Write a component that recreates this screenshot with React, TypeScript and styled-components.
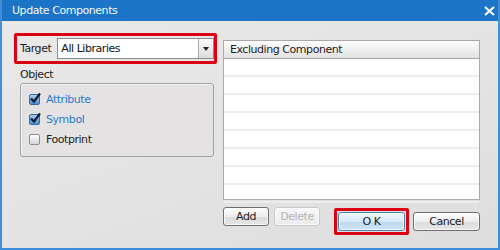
import React, { FC } from 'react';
import styled, { createGlobalStyle } from 'styled-components';

const GlobalStyle = createGlobalStyle`
  html, body {
    margin: 0;
    padding: 0;
    background: #ffffff;
  }
  body {
    font-family: 'DejaVu Sans', Verdana, sans-serif;
    letter-spacing: -0.45px;
  }
`;

const ROWS = 8;

const Window = styled.div`
  width: 500px;
  height: 250px;
  box-sizing: border-box;
  display: flex;
  flex-direction: column;
  border: 2px solid #3d8fdc;
  border-top: none;
  background: #1b74c5;
  overflow: hidden;
`;

const TitleBar = styled.div`
  height: 21px;
  flex: none;
  display: flex;
  align-items: center;
  justify-content: space-between;
  padding: 0 5px 0 12px;
  margin: 0 -2px;
  background: #1b74c5;
  color: #f4f8fd;
  font-size: 11px;
`;

const CloseIcon = styled.svg`
  width: 11px;
  height: 10px;
  margin-top: 1px;
`;

const Body = styled.div`
  flex: 1;
  display: flex;
  gap: 6px;
  padding: 12px 18px 0 12px;
  background: linear-gradient(160deg, #e9e9e9 0%, #dedede 100%);
`;

const LeftColumn = styled.div`
  width: 203px;
  display: flex;
  flex-direction: column;
`;

const RightColumn = styled.div`
  flex: 1;
  display: flex;
  flex-direction: column;
  padding-top: 7px;
`;

const Highlight = styled.div`
  border: 3px solid #dc0010;
  border-radius: 2px;
  padding: 1px;
  display: flex;
  align-items: center;
`;

const TargetBox = styled(Highlight)`
  height: 23px;
  padding: 1px 0 1px 3px;
  gap: 6px;
`;

const Label = styled.span<{ $color?: string }>`
  font-size: 11px;
  color: ${(p) => p.$color ?? '#222222'};
`;

const Combo = styled.div`
  flex: 1;
  height: 19px;
  display: flex;
  border: 1px solid #8c8c8c;
  background: #ffffff;
`;

const ComboText = styled.span`
  flex: 1;
  font-size: 11px;
  color: #111111;
  padding-left: 3px;
  line-height: 19px;
`;

const ComboButton = styled.div`
  width: 14px;
  border-left: 1px solid #a8a8a8;
  background: linear-gradient(#fbfbfb, #dcdcdc);
  display: flex;
  align-items: center;
  justify-content: center;
`;

const Arrow = styled.div`
  width: 0;
  height: 0;
  border-left: 3.5px solid transparent;
  border-right: 3.5px solid transparent;
  border-top: 4px solid #222222;
`;

const GroupTitle = styled.div`
  font-size: 11px;
  color: #222222;
  margin: 4px 0 0 6px;
  height: 15px;
`;

const GroupBox = styled.div`
  margin: 0 3px 0 6px;
  height: 74px;
  box-sizing: border-box;
  border: 1px solid #a2a2a2;
  border-radius: 3px;
  background: #e4e2e2;
  box-shadow: inset 1px 1px 0 #f4f4f4;
  display: flex;
  flex-direction: column;
  padding: 9px 0 0 8px;
  gap: 8px;
`;

const CheckRow = styled.div`
  display: flex;
  align-items: center;
  gap: 6px;
  height: 12px;
`;

const Box = styled.div<{ $checked?: boolean }>`
  width: 11px;
  height: 11px;
  box-sizing: border-box;
  border: 1px solid ${(p) => (p.$checked ? '#356aa3' : '#8e8e8e')};
  border-radius: 2px;
  background: ${(p) =>
    p.$checked ? 'linear-gradient(#a9cdef, #4f8fd0)' : 'linear-gradient(#ffffff, #d6d6d6)'};
  position: relative;
`;

const Tick = styled.svg`
  position: absolute;
  left: -1px;
  top: -3px;
  width: 12px;
  height: 12px;
`;

const List = styled.div`
  height: 160px;
  box-sizing: border-box;
  border: 1px solid #a9a9a9;
  background: #ffffff;
  display: flex;
  flex-direction: column;
`;

const ListHeader = styled.div`
  height: 18px;
  flex: none;
  box-sizing: border-box;
  border-bottom: 1px solid #a3a3a3;
  background: linear-gradient(#fdfdfd, #e2e2e2);
  font-size: 11px;
  color: #222222;
  padding-left: 6px;
  line-height: 18px;
`;

const ListRow = styled.div`
  height: 18px;
  flex: none;
  box-sizing: border-box;
  border-bottom: 2px solid #ededed;
`;

const ButtonBar = styled.div`
  display: flex;
  align-items: flex-start;
  margin-top: 7px;
`;

const Button = styled.button<{ $primary?: boolean; $width?: number }>`
  width: ${(p) => p.$width ?? 46}px;
  height: 19px;
  padding: 0;
  border: 1px solid ${(p) => (p.$primary ? '#4a7fae' : '#6f6f6f')};
  border-radius: 3px;
  background: ${(p) =>
    p.$primary
      ? 'linear-gradient(#eef6fd 0%, #d7e9f9 50%, #bcd9f2 51%, #cfe4f7 100%)'
      : 'linear-gradient(#fdfdfd 0%, #ededed 50%, #dcdcdc 51%, #e6e6e6 100%)'};
  font-family: 'DejaVu Sans', Verdana, sans-serif;
  font-size: 11px;
  letter-spacing: -0.45px;
  color: #1a1a1a;
  box-shadow: inset 0 0 0 1px rgba(255, 255, 255, 0.7);

  &:disabled {
    border-color: #c8c8c8;
    color: #b4b4b4;
    background: linear-gradient(#f7f7f7, #ececec);
  }
`;

const DeleteButton = styled(Button)`
  margin-left: 5px;
`;

const OkBox = styled(Highlight)`
  margin: 1px 0 0 14px;
`;

const CancelButton = styled(Button)`
  margin: 5px 0 0 4px;
`;

const Check: FC<{ checked?: boolean; label: string }> = ({ checked, label }) => (
  <CheckRow>
    <Box $checked={checked}>
      {checked && (
        <Tick viewBox="0 0 12 12">
          <path d="M2 6.5 L5 9.5 L11 1.5" fill="none" stroke="#0c1f3a" strokeWidth="2.2" />
        </Tick>
      )}
    </Box>
    <Label $color={checked ? '#2d7acb' : '#222222'}>{label}</Label>
  </CheckRow>
);

export default function App() {
  return (
    <>
      <GlobalStyle />
      <Window>
        <TitleBar>
          <span>Update Components</span>
          <CloseIcon viewBox="0 0 11 10">
            <path d="M1 1 L10 9 M10 1 L1 9" stroke="#ffffff" strokeWidth="2" />
          </CloseIcon>
        </TitleBar>
        <Body>
          <LeftColumn>
            <TargetBox>
              <Label>Target</Label>
              <Combo>
                <ComboText>All Libraries</ComboText>
                <ComboButton>
                  <Arrow />
                </ComboButton>
              </Combo>
            </TargetBox>
            <GroupTitle>Object</GroupTitle>
            <GroupBox>
              <Check checked label="Attribute" />
              <Check checked label="Symbol" />
              <Check label="Footprint" />
            </GroupBox>
          </LeftColumn>
          <RightColumn>
            <List>
              <ListHeader>Excluding Component</ListHeader>
              {Array.from({ length: ROWS }).map((_, i) => (
                <ListRow key={i} />
              ))}
            </List>
            <ButtonBar>
              <Button>Add</Button>
              <DeleteButton disabled>Delete</DeleteButton>
              <OkBox>
                <Button $primary $width={67}>
                  O K
                </Button>
              </OkBox>
              <CancelButton $width={67}>Cancel</CancelButton>
            </ButtonBar>
          </RightColumn>
        </Body>
      </Window>
    </>
  );
}
